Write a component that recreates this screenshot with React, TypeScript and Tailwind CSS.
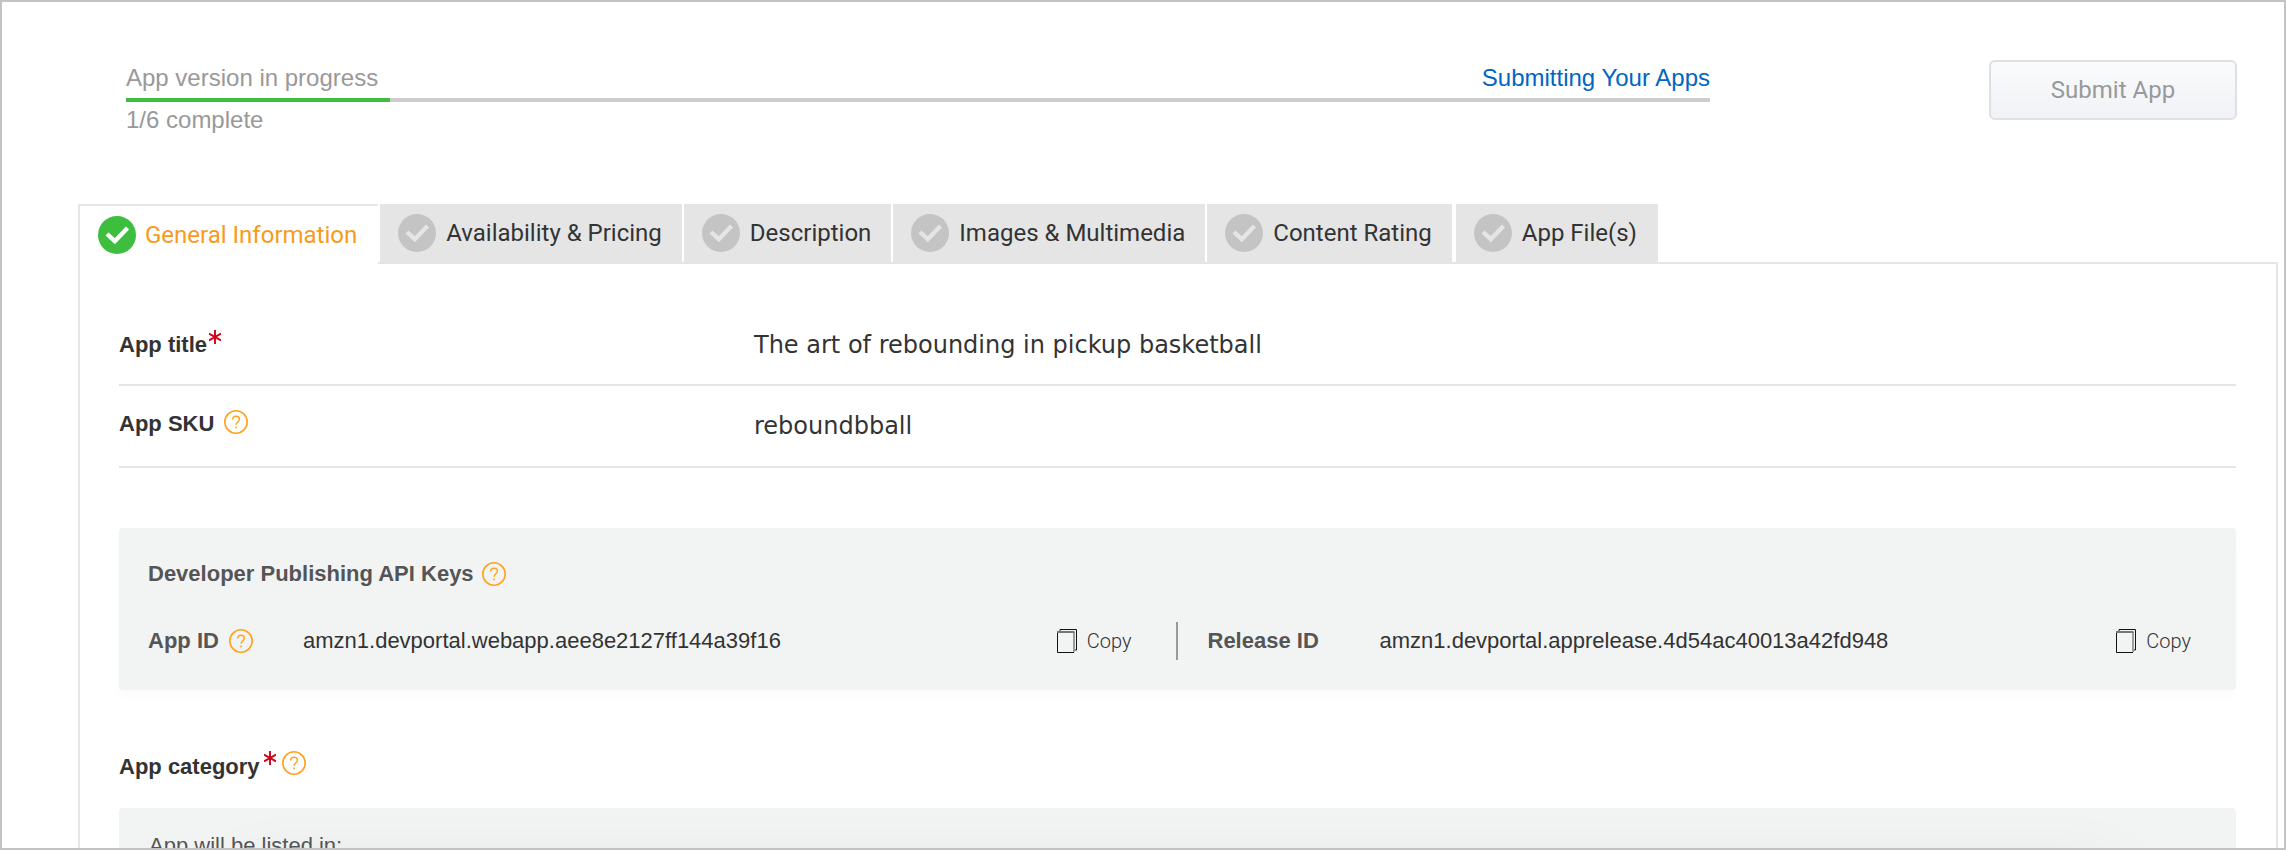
import React from "react";

const tabs = [
  { name: "General Information", active: true, done: true },
  { name: "Availability & Pricing" },
  { name: "Description" },
  { name: "Images & Multimedia" },
  { name: "Content Rating" },
  { name: "App File(s)", last: true },
];

function CheckBadge({ done }: { done?: boolean }) {
  return (
    <svg viewBox="0 0 38 38" className="size-[38px] shrink-0" aria-hidden="true">
      <circle cx="19" cy="19" r="19" fill={done ? "#3ebe3e" : "#c4c4c4"} />
      <path d="M9 18 L16.8 25.2 L29.5 12" fill="none" stroke={done ? "#fff" : "#e5e5e5"} strokeWidth="4.4" />
    </svg>
  );
}

function Help({ label }: { label: string }) {
  return (
    <button type="button" aria-label={label} className="size-6 shrink-0">
      <svg viewBox="0 0 24 24" className="size-6" fill="none" stroke="#ffa31f">
        <circle cx="12" cy="12" r="11.2" strokeWidth="1.6" />
        <path d="M8.6 9.4 C8.6 7.4 10 6.2 12 6.2 C14 6.2 15.4 7.4 15.4 9.2 C15.4 11.6 12.1 12 12.1 14.8" strokeWidth="1.5" />
        <path d="M12.1 16.4 V18.2" strokeWidth="1.6" />
      </svg>
    </button>
  );
}

function Required() {
  return (
    <svg viewBox="0 0 12 14" className="h-[14px] w-3 shrink-0" stroke="#d0021b" strokeWidth="1.9" aria-label="required">
      <path d="M6 0 V14 M0 3.6 L12 10.4 M12 3.6 L0 10.4" />
    </svg>
  );
}

function CopyButton() {
  return (
    <button type="button" className="flex items-center gap-[10px] font-['Roboto',sans-serif] text-xl leading-6 font-light text-[#333]">
      <svg viewBox="0 0 20 24" className="h-6 w-5" fill="none" aria-hidden="true">
        <path d="M3 2 V0.5 H19.5 V21 H18" stroke="#111" />
        <path d="M0.5 3 V23.5 H17" stroke="#111" />
        <path d="M17 23 V3" stroke="#777" strokeWidth="1.4" />
        <path d="M0 3 H17.5" stroke="#777" strokeWidth="2" />
      </svg>
      Copy
    </button>
  );
}

export default function App() {
  return (
    <div className="h-screen overflow-hidden border-2 border-[#c3c3c3] bg-white font-['Liberation_Sans',Arial,sans-serif] text-[#333]">
      <header className="flex items-start justify-between pt-[58px] pr-[47px] pl-[124px]">
        <div className="mr-[279px] flex-1 text-2xl leading-7 text-[#999]">
          <div className="flex justify-between pt-1 pb-[6px]">
            <span>App version in progress</span>
            <a href="#guide" className="text-[#0066c0]">Submitting Your Apps</a>
          </div>
          <div className="h-1 bg-[#ccc]">
            <div className="h-1 bg-[#3ebe3e]" style={{ width: `${100 / 6}%` }} />
          </div>
          <div className="pt-1">1/6 complete</div>
        </div>
        <button
          type="button"
          className="h-[60px] w-[248px] rounded-md border-2 border-[#dfe0e3] bg-linear-to-b from-[#fafbfd] to-[#f1f2f5] font-['Roboto',sans-serif] text-2xl text-[#999]"
        >
          Submit App
        </button>
      </header>

      <main className="mt-[70px] mr-[6px] ml-[76px]">
        <nav className="relative flex h-[60px] gap-[2px] font-['Roboto',sans-serif] text-2xl leading-7">
          {tabs.map((t) => (
            <button
              key={t.name}
              type="button"
              className={
                t.active
                  ? "z-10 flex items-center gap-[9px] border-t-2 border-l-2 border-[#e5e5e5] bg-white pr-[21px] pl-[18px] text-[#f89a20]"
                  : t.last
                    ? "ml-[2px] flex items-center gap-[10px] bg-[#e5e5e5] pr-[21px] pb-[2px] pl-[18px]"
                    : "flex items-center gap-[10px] bg-[#e5e5e5] pr-5 pb-[2px] pl-[18px]"
              }
            >
              <CheckBadge done={t.done} />
              {t.name}
            </button>
          ))}
          <div className="absolute inset-x-0 bottom-0 h-[2px] bg-[#e5e5e5]" />
        </nav>

        <section className="min-h-screen border-x-2 border-[#e5e5e5] pt-[38px] pr-10 pl-[39px]">
          <dl>
            <div className="flex h-[84px] items-center border-b-2 border-[#e5e5e5] pt-1">
              <dt className="flex w-[635px] items-center gap-[2px] text-[22px] leading-7 font-bold">
                App title
                <span className="-mt-4"><Required /></span>
              </dt>
              <dd className="font-['DejaVu_Sans',Verdana,sans-serif] text-2xl leading-7">The art of rebounding in pickup basketball</dd>
            </div>
            <div className="flex h-[82px] items-center border-b-2 border-[#e5e5e5]">
              <dt className="-mt-1 flex w-[635px] items-start gap-[10px] text-[22px] leading-7 font-bold">
                App SKU
                <Help label="About App SKU" />
              </dt>
              <dd className="font-['DejaVu_Sans',Verdana,sans-serif] text-2xl leading-7">reboundbball</dd>
            </div>
          </dl>

          <div className="mt-[60px] h-[162px] rounded bg-[#f2f4f4] px-[29px] pt-8 text-[22px] leading-7 shadow-[0_6px_12px_rgba(0,0,0,0.02)]">
            <h2 className="flex items-center gap-2 font-bold text-[#555]">
              Developer Publishing API Keys
              <Help label="About Developer Publishing API Keys" />
            </h2>
            <div className="mt-[34px] flex h-[38px] items-center">
              <div className="flex flex-1 items-center pr-[14px]">
                <span className="flex w-[155px] items-center gap-[10px] font-bold text-[#555]">
                  App ID
                  <Help label="About App ID" />
                </span>
                <span className="flex-1">amzn1.devportal.webapp.aee8e2127ff144a39f16</span>
                <CopyButton />
              </div>
              <div className="mx-[30px] h-[38px] w-[2px] bg-[#999]" />
              <div className="flex flex-1 items-center pr-4">
                <span className="w-[172px] font-bold text-[#555]">Release ID</span>
                <span className="flex-1">amzn1.devportal.apprelease.4d54ac40013a42fd948</span>
                <CopyButton />
              </div>
            </div>
          </div>

          <h2 className="mt-[63px] flex items-start text-[22px] leading-7 font-bold">
            App category
            <span className="-mt-[2px] ml-1 flex gap-[6px]">
              <Required />
              <Help label="About App category" />
            </span>
          </h2>

          <div className="mt-[27px] h-[200px] rounded bg-[#f2f4f4] px-[30px] pt-6 text-[22px] leading-7 text-[#555]">
            App will be listed in:
            <div className="mx-[90px] mt-3 h-[100px] shadow-[0_0_70px_rgba(0,0,0,0.08)]" />
          </div>
        </section>
      </main>
    </div>
  );
}
